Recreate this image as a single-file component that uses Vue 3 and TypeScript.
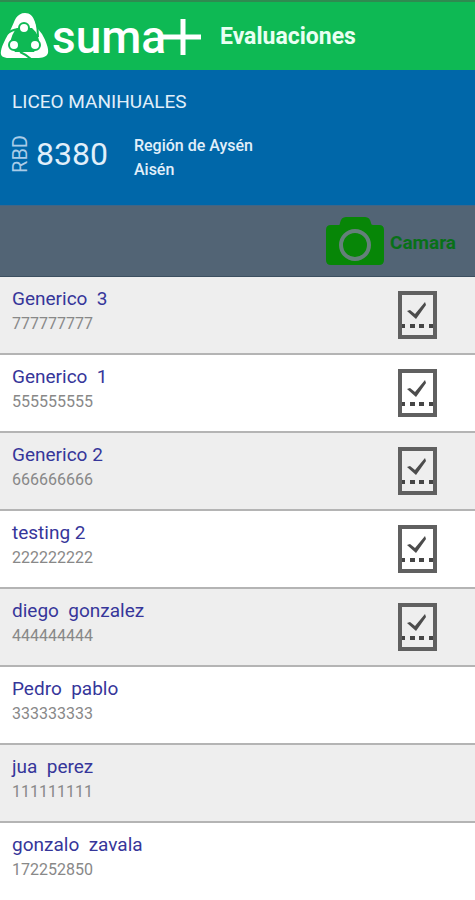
<script setup lang="ts">
interface Student {
  name: string
  id: string
  evaluated: boolean
}

const students: Student[] = [
  { name: 'Generico  3', id: '777777777', evaluated: true },
  { name: 'Generico  1', id: '555555555', evaluated: true },
  { name: 'Generico 2', id: '666666666', evaluated: true },
  { name: 'testing 2', id: '222222222', evaluated: true },
  { name: 'diego  gonzalez', id: '444444444', evaluated: true },
  { name: 'Pedro  pablo', id: '333333333', evaluated: false },
  { name: 'jua  perez', id: '111111111', evaluated: false },
  { name: 'gonzalo  zavala', id: '172252850', evaluated: false },
]
</script>

<template>
  <div class="page">
    <header class="topbar">
      <svg class="logo" viewBox="0 0 204 68" role="img" aria-label="suma+">
        <path fill="#fff" d="M25 11 C30 11 33 14 35 20 L38 27 L42 32 C46 39 49 47 48 51 C47 55 42 56 37 56 H9 C3 56 0 54 1 49 C2 43 6 36 10 29 C13 23 14 19 16 16 C18 13 21 11 25 11Z" />
        <path fill="#0eb954" d="M17 26 H32 Q40 33 39 43 L34 50 H15 L10 43 Q11 32 17 26Z" />
        <g fill="#fff" stroke="#0eb954" stroke-width="2">
          <circle cx="24" cy="26" r="5" />
          <circle cx="14" cy="43" r="5" />
          <circle cx="35" cy="43" r="5" />
        </g>
        <g fill="none" stroke="#0eb954" stroke-width="2">
          <path d="M7 32 Q11 28 18 27" />
          <path d="M36 18 Q38 27 38 35" />
          <path d="M20 50 Q25 52 31 57" />
        </g>
        <text class="word" x="52" y="51">suma</text>
        <path d="M162 35 H201 M183 17 V53" fill="none" stroke="#fff" stroke-width="5" />
      </svg>
      <h1>Evaluaciones</h1>
    </header>

    <section class="school">
      <h2>LICEO MANIHUALES</h2>
      <div class="details">
        <div class="number">
          <span class="rbd">RBD</span>
          <span class="code">8380</span>
        </div>
        <p class="place">Región de Aysén<br />Aisén</p>
      </div>
    </section>

    <div class="tools">
      <button type="button" class="camera">
        <svg viewBox="0 0 58 50" width="58" height="50" aria-hidden="true">
          <path fill="#078607" d="M5 9 H13 Q14 9 14 7 Q15 1 20 1 H39 Q44 1 45 7 Q45 9 47 9 H53 Q58 9 58 14 V44 Q58 49 53 49 H5 Q0 49 0 44 V14 Q0 9 5 9Z" />
          <circle cx="29" cy="29" r="14" fill="none" stroke="#64807a" stroke-width="4" />
        </svg>
        <span>Camara</span>
      </button>
    </div>

    <ul class="list">
      <li v-for="student in students" :key="student.id" class="row">
        <div>
          <div class="name">{{ student.name }}</div>
          <div class="id">{{ student.id }}</div>
        </div>
        <svg v-if="student.evaluated" class="sheet" viewBox="0 0 40 48" width="40" height="48" role="img" aria-label="Evaluado">
          <rect x="3" y="2" width="35" height="44" fill="none" stroke="#606060" stroke-width="4" />
          <path d="M10 20 L13 19 L18 23 L28 11 L29 14 L19 28Z" fill="#4c4c4c" />
          <path d="M5 35 H8 M13 35 H18 M22 35 H27 M32 35 H36" stroke="#454545" stroke-width="4" />
        </svg>
      </li>
    </ul>
  </div>
</template>

<style>
body {
  margin: 0;
  background: #fff;
}
</style>

<style scoped>
.page {
  min-height: 100vh;
  font-family: Roboto, "Liberation Sans", sans-serif;
  overflow: hidden;
}

.topbar {
  display: flex;
  align-items: center;
  gap: 16px;
  height: 68px;
  border-top: 2px solid #2f8a50;
  background: #0eb954;
}

.logo {
  width: 204px;
  height: 68px;
  flex: none;
}

.word {
  font-family: Roboto, "Liberation Sans", sans-serif;
  font-size: 46px;
  font-weight: 500;
  fill: #fff;
}

h1 {
  margin: 0;
  padding-top: 2px;
  font-size: 23px;
  line-height: 28px;
  font-weight: 700;
  color: #e9fff2;
}

.school {
  height: 135px;
  padding: 18px 12px;
  box-sizing: border-box;
  background: #0067a9;
  color: #e1effa;
}

h2 {
  margin: 0;
  font-size: 19px;
  line-height: 28px;
  font-weight: 400;
}

.details {
  display: flex;
  align-items: flex-start;
  gap: 26px;
  margin-top: 18px;
}

.number {
  display: flex;
  align-items: center;
  gap: 8px;
}

.rbd {
  writing-mode: vertical-rl;
  transform: rotate(180deg);
  font-size: 20px;
  line-height: 16px;
  color: #a9cce8;
}

.code {
  font-size: 32px;
  line-height: 40px;
}

.place {
  margin: 0;
  font-size: 16px;
  line-height: 24px;
  font-weight: 500;
}

.tools {
  display: flex;
  justify-content: flex-end;
  align-items: center;
  height: 72px;
  padding-right: 19px;
  box-sizing: border-box;
  border-top: 1px solid #3f6587;
  border-bottom: 1px solid #3c4f60;
  background: #526475;
}

.camera {
  display: flex;
  align-items: center;
  gap: 6px;
  padding: 0;
  border: 0;
  background: none;
  color: #087018;
  font: 700 19px/24px Roboto, "Liberation Sans", sans-serif;
}

.camera span {
  padding-top: 4px;
}

.list {
  margin: 0;
  padding: 0;
  list-style: none;
}

.row {
  display: flex;
  justify-content: space-between;
  align-items: flex-start;
  height: 78px;
  padding: 9px 38px 0 12px;
  box-sizing: border-box;
  border-bottom: 2px solid #b4b4b4;
  background: #fff;
}

.row:nth-child(odd) {
  background: #eee;
}

.row:last-child {
  border-bottom: 0;
}

.name {
  font-size: 19px;
  line-height: 26px;
  color: #36369a;
  white-space: pre;
}

.id {
  font-size: 16px;
  line-height: 24px;
  color: #888;
}

.sheet {
  margin-top: 5px;
}
</style>
